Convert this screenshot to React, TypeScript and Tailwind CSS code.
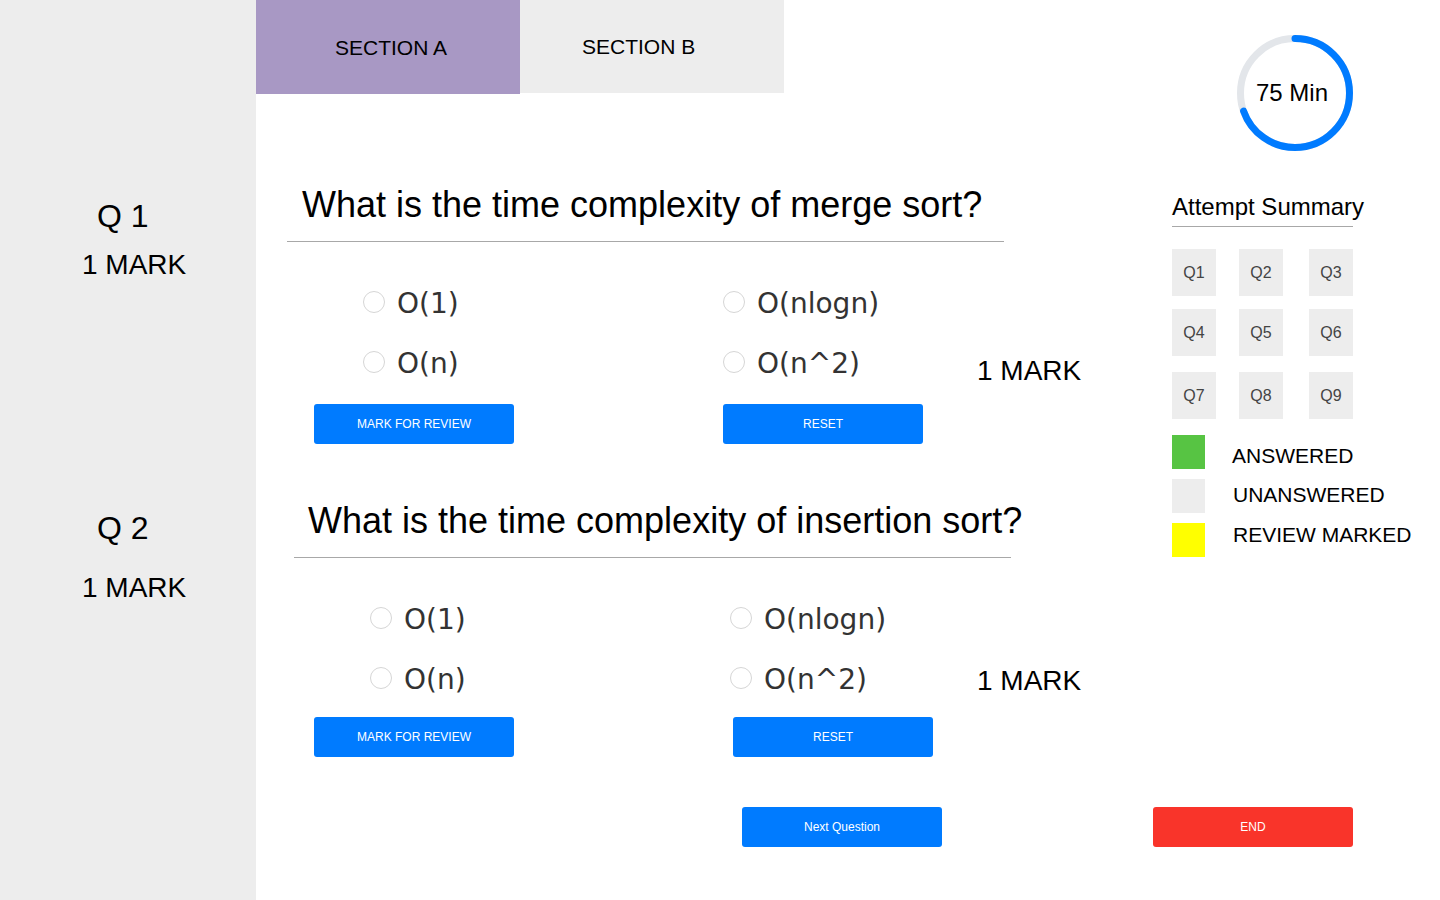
import React from 'react';

type Question = {
  text: string;
  options: [string, string, string, string];
  headingIndent: string;
  textIndent: string;
  optionsIndent: string;
  rightCol: string;
  markOffset: string;
  resetGap: string;
};

const questions: Question[] = [
  {
    text: 'What is the time complexity of merge sort?',
    options: ['O(1)', 'O(nlogn)', 'O(n)', 'O(n^2)'],
    headingIndent: 'ml-[31px]',
    textIndent: 'pl-[15px]',
    optionsIndent: 'ml-[107px]',
    rightCol: 'w-[254px]',
    markOffset: 'pt-[18px]',
    resetGap: 'ml-[209px]',
  },
  {
    text: 'What is the time complexity of insertion sort?',
    options: ['O(1)', 'O(nlogn)', 'O(n)', 'O(n^2)'],
    headingIndent: 'ml-[38px]',
    textIndent: 'pl-[14px]',
    optionsIndent: 'ml-[114px]',
    rightCol: 'w-[247px]',
    markOffset: 'pt-[6px]',
    resetGap: 'ml-[219px]',
  },
];

const summary = [
  ['Q1', 'Q2', 'Q3'],
  ['Q4', 'Q5', 'Q6'],
  ['Q7', 'Q8', 'Q9'],
];

function Radio({ label, width = 'w-[360px]' }: { label: string; width?: string }) {
  return (
    <div className={`flex items-center h-[60px] ${width}`}>
      <span className="w-[22px] h-[22px] rounded-full border border-[#d6d6d6] bg-white shrink-0" />
      <span className="ml-[12px] mt-[3px] text-[28px] leading-[32px] text-[#333] font-['DejaVu_Sans',sans-serif]">
        {label}
      </span>
    </div>
  );
}

function BlueButton({ label, className = '' }: { label: string; className?: string }) {
  return (
    <button className={`w-[200px] h-[40px] rounded-[3px] bg-[#007bff] text-white text-[12px] ${className}`}>
      {label}
    </button>
  );
}

function QuestionBlock({ q, first }: { q: Question; first: boolean }) {
  return (
    <div className={first ? 'mt-[90px]' : 'mt-[56px]'}>
      <div className={`${q.headingIndent} w-[717px] border-b border-[#a8a8a8] pb-[16px] ${q.textIndent}`}>
        <h2 className="text-[36px] leading-[41px] text-black whitespace-nowrap">{q.text}</h2>
      </div>
      <div className={`${q.optionsIndent} mt-[30px]`}>
        <div className="flex h-[60px]">
          <Radio label={q.options[0]} />
          <Radio label={q.options[1]} />
        </div>
        <div className="flex h-[60px]">
          <Radio label={q.options[2]} />
          <Radio label={q.options[3]} width={q.rightCol} />
          <div className={`flex items-center h-[60px] ${q.markOffset}`}>
            <span className="text-[28px] leading-[32px] text-black whitespace-nowrap">1 MARK</span>
          </div>
        </div>
      </div>
      <div className={`flex ml-[58px] ${first ? 'mt-[12px]' : 'mt-[9px]'}`}>
        <BlueButton label="MARK FOR REVIEW" />
        <BlueButton label="RESET" className={q.resetGap} />
      </div>
    </div>
  );
}

function Timer() {
  const r = 54.5;
  const c = 2 * Math.PI * r;
  const progress = 0.695;
  return (
    <div className="relative w-[116px] h-[116px]">
      <svg width="116" height="116" viewBox="0 0 116 116">
        <circle cx="58" cy="58" r={r} fill="none" stroke="#e3e6ea" strokeWidth="7" />
        <circle
          cx="58"
          cy="58"
          r={r}
          fill="none"
          stroke="#007bff"
          strokeWidth="7"
          strokeLinecap="round"
          strokeDasharray={`${c * progress} ${c}`}
          transform="rotate(-90 58 58)"
        />
      </svg>
      <div className="absolute inset-0 flex items-center justify-center text-[24px] text-black pr-[6px]">
        75 Min
      </div>
    </div>
  );
}

export default function App() {
  return (
    <div className="flex h-screen w-full bg-white overflow-hidden font-['Liberation_Sans',Arial,sans-serif]">
      <aside className="w-[256px] h-full bg-[#ededed] shrink-0">
        <div className="pt-[198px] pl-[97px] text-[32px] leading-[37px] text-black">Q 1</div>
        <div className="mt-[14px] pl-[82px] text-[28px] leading-[32px] text-black">1 MARK</div>
        <div className="mt-[229px] pl-[97px] text-[32px] leading-[37px] text-black">Q 2</div>
        <div className="mt-[25px] pl-[82px] text-[28px] leading-[32px] text-black">1 MARK</div>
      </aside>

      <main className="w-[884px] shrink-0">
        <div className="flex">
          <div className="w-[264px] h-[94px] bg-[#a898c4] flex items-center pl-[79px] pt-[2px] text-[21px] text-black">
            SECTION A
          </div>
          <div className="w-[264px] h-[93px] bg-[#ededed] flex items-center pl-[62px] text-[21px] text-black">
            SECTION B
          </div>
        </div>
        {questions.map((q, i) => (
          <QuestionBlock key={i} q={q} first={i === 0} />
        ))}
        <div className="mt-[50px] ml-[486px]">
          <BlueButton label="Next Question" />
        </div>
      </main>

      <section className="flex-1 pt-[35px]">
        <div className="ml-[97px]">
          <Timer />
        </div>
        <div className="ml-[32px] mt-[42px] w-[181px] border-b border-[#a8a8a8] pb-[5px]">
          <h3 className="text-[24px] leading-[28px] text-black whitespace-nowrap">Attempt Summary</h3>
        </div>
        <div className="ml-[32px] mt-[22px]">
          {summary.map((row, ri) => (
            <div key={ri} className={`flex ${ri === 0 ? '' : ri === 1 ? 'mt-[13px]' : 'mt-[16px]'}`}>
              {row.map((label, ci) => (
                <div
                  key={label}
                  className={`w-[44px] h-[47px] bg-[#ededed] flex items-center justify-center text-[16px] text-[#444] ${
                    ci === 1 ? 'ml-[23px]' : ci === 2 ? 'ml-[26px]' : ''
                  }`}
                >
                  {label}
                </div>
              ))}
            </div>
          ))}
        </div>
        <div className="ml-[32px] mt-[16px] flex flex-col gap-[10px]">
          <div className="flex items-start h-[34px]">
            <span className="w-[33px] h-[34px] bg-[#57c443] shrink-0" />
            <span className="ml-[27px] mt-[9px] text-[21px] leading-[24px] text-black">ANSWERED</span>
          </div>
          <div className="flex items-start h-[34px]">
            <span className="w-[33px] h-[34px] bg-[#ededed] shrink-0" />
            <span className="ml-[28px] mt-[4px] text-[21px] leading-[24px] text-black">UNANSWERED</span>
          </div>
          <div className="flex items-start h-[34px]">
            <span className="w-[33px] h-[34px] bg-[#ffff00] shrink-0" />
            <span className="ml-[28px] text-[21px] leading-[24px] text-black whitespace-nowrap">REVIEW MARKED</span>
          </div>
        </div>
        <div className="ml-[13px] mt-[250px]">
          <button className="w-[200px] h-[40px] rounded-[3px] bg-[#f9342a] text-white text-[12px]">END</button>
        </div>
      </section>
    </div>
  );
}
